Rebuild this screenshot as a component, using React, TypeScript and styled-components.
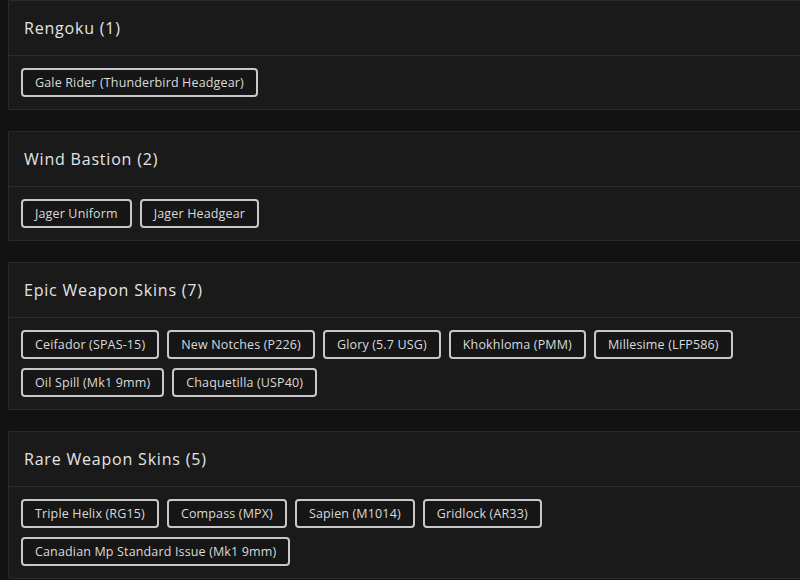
import React, { ReactElement } from "react";
import styled, { createGlobalStyle } from "styled-components";

const GlobalStyle = createGlobalStyle`
    html, body {
        margin: 0;
        padding: 0;
        background: #121212;
        overflow: hidden;
    }
    body {
        font-family: "Open Sans", "Noto Sans", sans-serif;
        color: #e2e2e2;
    }
`;

const Page = styled.div`
    box-sizing: border-box;
    display: flex;
    flex-direction: column;
    gap: 21px;
    width: 100%;
    padding-left: 8px;
`;

// card runs on past the right edge of the window, so no right border
const Card = styled.section`
    background: #1a1a1a;
    border: 1px solid #2a2a2a;
    border-right: none;
    border-radius: 2px 0 0 2px;
`;

const CardHeader = styled.header`
    height: 54px;
    display: flex;
    align-items: center;
    padding: 0 15px;
    border-bottom: 1px solid #2c2c2c;
    font-size: 16px;
    font-weight: 500;
    letter-spacing: 0.8px;
    color: #e4e4e4;
`;

const CardBody = styled.div`
    display: flex;
    flex-wrap: wrap;
    gap: 9px 8px;
    max-width: 760px;
    padding: 12px;
`;

const Tag = styled.span`
    box-sizing: border-box;
    height: 29px;
    display: inline-flex;
    align-items: center;
    padding: 0 12px;
    border: 2px solid #c8c8c8;
    border-radius: 4px;
    background: #161616;
    font-size: 12.5px;
    letter-spacing: 0.15px;
    color: #dadada;
    white-space: nowrap;
`;

interface Group {
    title: string;
    items: string[];
}

const groups: Group[] = [
    { title: "Rengoku", items: ["Gale Rider (Thunderbird Headgear)"] },
    { title: "Wind Bastion", items: ["Jager Uniform", "Jager Headgear"] },
    {
        title: "Epic Weapon Skins",
        items: [
            "Ceifador (SPAS-15)",
            "New Notches (P226)",
            "Glory (5.7 USG)",
            "Khokhloma (PMM)",
            "Millesime (LFP586)",
            "Oil Spill (Mk1 9mm)",
            "Chaquetilla (USP40)"
        ]
    },
    {
        title: "Rare Weapon Skins",
        items: [
            "Triple Helix (RG15)",
            "Compass (MPX)",
            "Sapien (M1014)",
            "Gridlock (AR33)",
            "Canadian Mp Standard Issue (Mk1 9mm)"
        ]
    }
];

const App = (): ReactElement => (
    <>
        <GlobalStyle />
        <Page>
            {groups.map((g) => (
                <Card key={g.title}>
                    <CardHeader>
                        {g.title} ({g.items.length})
                    </CardHeader>
                    <CardBody>
                        {g.items.map((item) => (
                            <Tag key={item}>{item}</Tag>
                        ))}
                    </CardBody>
                </Card>
            ))}
        </Page>
    </>
);

export default App;
